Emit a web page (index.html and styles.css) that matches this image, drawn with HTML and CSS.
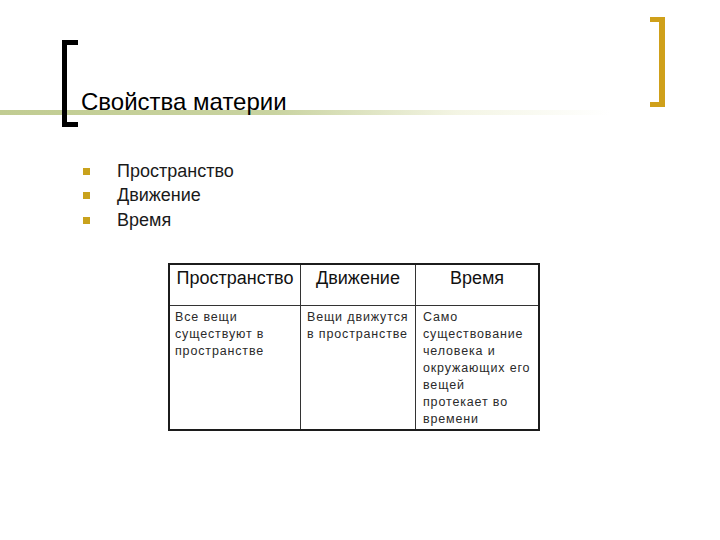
FILE: index.html
```html
<!DOCTYPE html>
<html lang="ru">
<head>
<meta charset="utf-8">
<title>Свойства материи</title>
<link rel="stylesheet" href="styles.css">
</head>
<body>
<div class="slide">
  <header class="head">
    <div class="title-group">
      <div class="bracket-left"></div>
      <h1 class="title">Свойства материи</h1>
    </div>
    <div class="bracket-right"></div>
  </header>

  <ul class="bullets">
    <li class="bullet-item"><span class="mark"></span>Пространство</li>
    <li class="bullet-item"><span class="mark"></span>Движение</li>
    <li class="bullet-item"><span class="mark"></span>Время</li>
  </ul>

  <div class="grid">
    <div class="cell hcell c1">Пространство</div>
    <div class="cell hcell c2">Движение</div>
    <div class="cell hcell c3">Время</div>
    <div class="cell bcell c1">Все вещи<br>существуют в<br>пространстве</div>
    <div class="cell bcell c2">Вещи движутся<br>в пространстве</div>
    <div class="cell bcell c3">Само<br>существование<br>человека и<br>окружающих его<br>вещей<br>протекает во<br>времени</div>
  </div>
</div>
</body>
</html>
```

FILE: styles.css
```css
html, body {
  margin: 0;
  padding: 0;
  background: #ffffff;
}

.slide {
  width: 720px;
  height: 540px;
  font-family: "Liberation Sans", Arial, sans-serif;
  color: #000;
}

.head {
  display: flex;
  justify-content: space-between;
  align-items: flex-start;
  height: 127px;
  background-image: linear-gradient(to right, #c1cc92 0%, #c9d3a0 45%, rgba(236, 238, 210, 0.6) 75%, rgba(255, 255, 255, 0) 100%);
  background-repeat: no-repeat;
  background-size: 610px 5px;
  background-position: 0 110px;
}

.title-group {
  display: flex;
  margin-left: 62px;
  margin-top: 40px;
}

.bracket-left {
  width: 11px;
  height: 77px;
  border-left: 5px solid #000;
  border-top: 5px solid #000;
  border-bottom: 5px solid #000;
}

.title {
  margin: 0 0 11px 3px;
  align-self: flex-end;
  font-size: 24px;
  line-height: 28px;
  font-weight: normal;
  color: #000;
}

.bracket-right {
  margin-top: 17px;
  margin-right: 55px;
  width: 9px;
  height: 80px;
  border-right: 6px solid #cfa01a;
  border-top: 5px solid #cfa01a;
  border-bottom: 5px solid #cfa01a;
}

.bullets {
  list-style: none;
  margin: 32px 0 0 0;
  padding: 0;
}

.bullet-item {
  display: flex;
  align-items: center;
  height: 24.5px;
  font-size: 18px;
  color: #1a1a1a;
}

.mark {
  width: 7px;
  height: 7px;
  margin-left: 83px;
  margin-right: 27px;
  background: #c9a21c;
}

.grid {
  display: grid;
  grid-template-columns: 131px 115px 122px;
  grid-template-rows: 41px 123px;
  width: 368px;
  margin: 30px 0 0 168px;
  border: 2px solid #1c1c1c;
}

.cell {
  box-sizing: border-box;
}

.c1, .c2 {
  border-right: 1px solid #333;
}

.hcell {
  border-bottom: 1px solid #333;
  padding-top: 3px;
  font-size: 18px;
  line-height: 21px;
  text-align: center;
  color: #111;
  white-space: nowrap;
}

.bcell {
  padding-top: 3px;
  font-size: 12.5px;
  line-height: 17px;
  letter-spacing: 0.85px;
  color: #2a2a2a;
  white-space: nowrap;
}

.bcell.c1 { padding-left: 5px; }
.bcell.c2 { padding-left: 6px; }
.bcell.c3 { padding-left: 7px; }
```
